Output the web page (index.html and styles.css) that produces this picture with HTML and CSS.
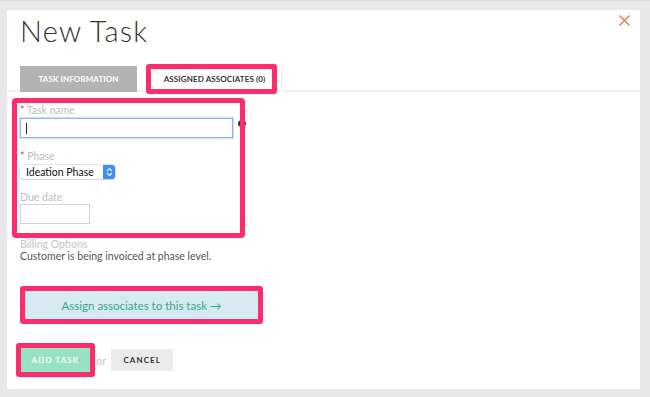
FILE: index.html
```html
<!DOCTYPE html>
<html lang="en">
<head>
    <meta charset="UTF-8">
    <meta name="viewport" content="width=device-width, initial-scale=1.0">
    <title>New Task</title>
    <link rel="stylesheet" href="styles.css">
</head>
<body>
    <div class="panel">
        <!-- Fermer -->
        <svg class="close" width="11" height="11" viewBox="0 0 11 11">
            <path d="M0.5 0.5 L10.5 10.5 M10.5 0.5 L0.5 10.5" stroke="#f2694a" stroke-width="1.3" fill="none"/>
        </svg>

        <h1>New Task</h1>

        <div class="tabs">
            <div class="tab tab-active">TASK INFORMATION</div>
            <div class="tab tab-other">
                ASSIGNED ASSOCIATES (0)
                <span class="mark mark-tab"></span>
            </div>
        </div>

        <div class="content">
            <div class="form-box">
                <label class="lbl"><span class="req">*</span> Task name</label>
                <div class="input focused"><span class="caret"></span></div>

                <label class="lbl gap"><span class="req">*</span> Phase</label>
                <div class="select">
                    <span>Ideation Phase</span>
                    <span class="stepper">
                        <svg width="7" height="10" viewBox="0 0 7 10">
                            <path d="M1 4 L3.5 1.5 L6 4 M1 6 L3.5 8.5 L6 6" stroke="#fff" stroke-width="1.1" fill="none"/>
                        </svg>
                    </span>
                </div>

                <label class="lbl gap">Due date</label>
                <div class="input date"></div>
            </div>
            <span class="dot"></span>

            <div class="billing-label">Billing Options</div>
            <div class="billing-text">Customer is being invoiced at phase level.</div>

            <div class="assign-box">
                <div class="assign">Assign associates to this task &rarr;</div>
            </div>

            <div class="actions">
                <div class="add-box">
                    <button class="btn btn-add">ADD TASK</button>
                </div>
                <span class="or">or</span>
                <button class="btn btn-cancel">CANCEL</button>
            </div>
        </div>
    </div>
</body>
</html>
```

FILE: styles.css
```css
/* Mise en page */
body { margin: 0; background: #e8e8e8; font-family: Lato, "Open Sans", sans-serif; border-top: 1px solid #dcdcdc; }
.panel { position: relative; z-index: 0; background: #fff; margin: 9px 0 0 7px; width: 633px; height: 379px; box-sizing: border-box; }
.close { position: absolute; top: 5px; right: 10px; }

h1 { margin: 0; padding: 4px 0 0 13px; font-size: 29px; line-height: 34px; font-weight: 300; color: #333; letter-spacing: 1.2px; }

/* Onglets */
.tabs { display: flex; gap: 10px; margin-top: 18px; padding-left: 13px; border-bottom: 2px solid #f0f0f0; height: 24px; }
.tab { position: relative; height: 26px; line-height: 26px; font-size: 8px; font-weight: 700; text-align: center; letter-spacing: 0.1px; box-sizing: border-box; }
.tab-active { width: 117px; background: #b3b3b3; color: #fff; }
.tab-other { width: 135px; border: 1px solid #eee; border-bottom: none; background: #fff; color: #333; line-height: 25px; }

/* Annotations roses */
.mark { position: absolute; border: 5px solid #fd2d6d; border-radius: 3px; }
.mark-tab { left: -2px; top: -3px; width: 121px; height: 20px; }

.content { padding: 6px 0 0 13px; }
.form-box { margin-left: -8px; width: 233px; height: 140px; box-sizing: border-box; border: 5px solid #fd2d6d; border-radius: 4px; padding: 0 0 0 3px; }
.dot { position: absolute; z-index: -1; left: 231px; top: 110px; width: 8px; height: 7px; border-radius: 50%; background: #333; }

.lbl { display: block; font-size: 10.5px; line-height: 14px; color: #bdbdbd; }
.lbl.gap { margin-top: 11px; }
.req { color: #e2443c; }

.input { margin-top: 1px; height: 20px; box-sizing: border-box; border: 1px solid #cfcfcf; background: #fff; }
.input.focused { width: 213px; border-color: #8db6ea; box-shadow: 0 0 1px 1px #cfe1f7; padding: 4px 0 0 5px; }
.caret { display: block; width: 1px; height: 11px; background: #222; }
.input.date { width: 70px; margin-top: 0; border-color: #d2d2d2; }

.select { display: flex; align-items: center; justify-content: space-between; margin-top: 2px; width: 95px; height: 14px; box-sizing: border-box; border-radius: 3px; box-shadow: 0 0 0 0.5px #c8c8c8, 0 1px 1px #ddd; font-size: 10.5px; color: #111; padding-left: 6px; }
.stepper { display: flex; align-items: center; justify-content: center; width: 12px; height: 14px; background: #3d8ef5; border-radius: 0 3px 3px 0; }

.billing-label { font-size: 10.5px; line-height: 12px; color: #c4c4c4; }
.billing-text { font-size: 10.5px; line-height: 12px; color: #555; }

.assign-box { margin-top: 24px; width: 243px; height: 38px; box-sizing: border-box; border: 5px solid #fd2d6d; border-radius: 3px; }
.assign { height: 100%; background: #d6eaf4; color: #36a98a; font-size: 11.5px; display: flex; align-items: center; justify-content: center; }

.actions { display: flex; align-items: center; margin-top: 19px; margin-left: -4px; }
.add-box { border: 5px solid #fd2d6d; border-radius: 3px; }
.btn { border: none; font-family: inherit; font-size: 8px; font-weight: 700; letter-spacing: 1.1px; padding: 0; cursor: pointer; }
.btn-add { display: block; width: 69px; height: 24px; background: #97e2c4; color: #fff; }
.or { margin: 0 5px 0 1px; font-size: 11px; color: #c4c4c4; }
.btn-cancel { width: 62px; height: 22px; background: #ebebeb; color: #333; }
```
